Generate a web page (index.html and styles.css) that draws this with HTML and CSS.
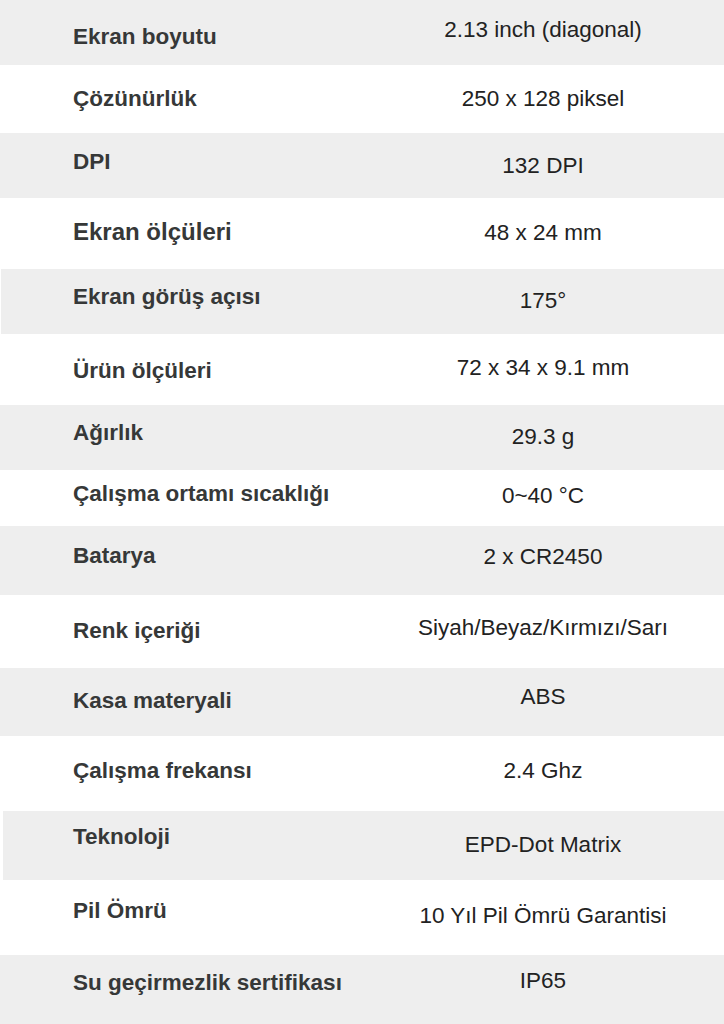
FILE: index.html
```html
<!DOCTYPE html>
<html lang="tr">
<head>
<meta charset="utf-8">
<title>Teknik Özellikler</title>
<link rel="stylesheet" href="styles.css">
</head>
<body>
<div class="specs">
  <div class="row gray" style="--h:65px;--l:37px;--v:30px"><div class="label">Ekran boyutu</div><div class="value">2.13 inch (diagonal)</div></div>
  <div class="row" style="--h:68px;--l:34px;--v:34px"><div class="label">Çözünürlük</div><div class="value">250 x 128 piksel</div></div>
  <div class="row gray" style="--h:65px;--l:29px;--v:33px"><div class="label">DPI</div><div class="value">132 DPI</div></div>
  <div class="row" style="--h:71px;--l:34px;--v:35px"><div class="label big">Ekran ölçüleri</div><div class="value">48 x 24 mm</div></div>
  <div class="row gray shift-sm" style="--h:65px;--l:28px;--v:32px"><div class="label">Ekran görüş açısı</div><div class="value">175°</div></div>
  <div class="row" style="--h:71px;--l:37px;--v:34px"><div class="label">Ürün ölçüleri</div><div class="value">72 x 34 x 9.1 mm</div></div>
  <div class="row gray" style="--h:65px;--l:28px;--v:32px"><div class="label">Ağırlık</div><div class="value">29.3 g</div></div>
  <div class="row" style="--h:56px;--l:24px;--v:26px"><div class="label">Çalışma ortamı sıcaklığı</div><div class="value">0~40 °C</div></div>
  <div class="row gray" style="--h:69px;--l:30px;--v:31px"><div class="label">Batarya</div><div class="value">2 x CR2450</div></div>
  <div class="row" style="--h:73px;--l:36px;--v:33px"><div class="label">Renk içeriği</div><div class="value">Siyah/Beyaz/Kırmızı/Sarı</div></div>
  <div class="row gray" style="--h:68px;--l:33px;--v:29px"><div class="label">Kasa materyali</div><div class="value">ABS</div></div>
  <div class="row" style="--h:75px;--l:35px;--v:35px"><div class="label">Çalışma frekansı</div><div class="value">2.4 Ghz</div></div>
  <div class="row gray shift" style="--h:69px;--l:26px;--v:34px"><div class="label">Teknoloji</div><div class="value">EPD-Dot Matrix</div></div>
  <div class="row" style="--h:75px;--l:31px;--v:36px"><div class="label">Pil Ömrü</div><div class="value">10 Yıl Pil Ömrü Garantisi</div></div>
  <div class="row gray" style="--h:69px;--l:28px;--v:26px"><div class="label">Su geçirmezlik sertifikası</div><div class="value">IP65</div></div>
</div>
</body>
</html>
```
FILE: styles.css
```css
html, body {
  margin: 0;
  padding: 0;
  background: #ffffff;
}

body {
  font-family: "Liberation Sans", Arial, sans-serif;
  width: 724px;
  overflow: hidden;
}

.specs {
  display: flex;
  flex-direction: column;
}

.row {
  display: grid;
  grid-template-columns: 362px 362px;
  height: var(--h);
  background: #ffffff;
  box-sizing: border-box;
}

.row.gray {
  background: #eeeeee;
}

.row.shift {
  margin-left: 3px;
  grid-template-columns: 359px 362px;
}

.row.shift-sm {
  margin-left: 1px;
  grid-template-columns: 361px 362px;
}

.label,
.value {
  font-size: 22.5px;
  line-height: 26px;
  white-space: nowrap;
}

.label {
  padding-left: 73px;
  padding-top: calc(var(--l) - 13px);
  font-weight: bold;
  color: #363838;
}

.row.shift .label {
  padding-left: 70px;
}

.row.shift-sm .label {
  padding-left: 72px;
}

.label.big {
  font-size: 24px;
}

.value {
  padding-top: calc(var(--v) - 13px);
  text-align: center;
  color: #222222;
}
```
